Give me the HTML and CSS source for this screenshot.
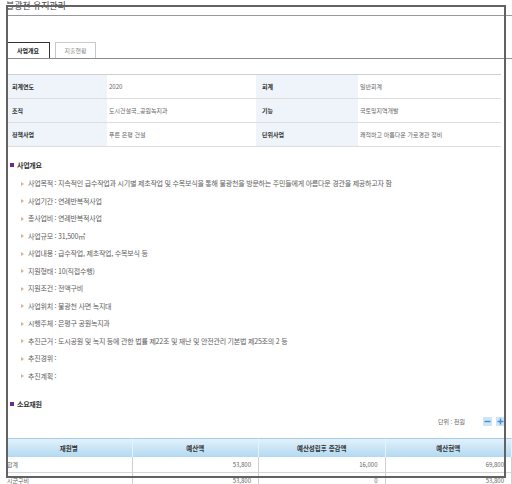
FILE: index.html
```html
<!DOCTYPE html>
<html lang="ko">
<head>
<meta charset="utf-8">
<title>불광천 유지관리</title>
<link rel="stylesheet" href="styles.css">
</head>
<body>
<div class="page">
  <div class="title">불광천 유지관리</div>
  <div class="tabs">
    <div class="tab active">사업개요</div>
    <div class="tab">지출현황</div>
  </div>

  <div class="info">
    <div class="lbl">회계연도</div><div class="val">2020</div>
    <div class="lbl">회계</div><div class="val">일반회계</div>
    <div class="lbl">조직</div><div class="val">도시건설국_공원녹지과</div>
    <div class="lbl">기능</div><div class="val">국토및지역개발</div>
    <div class="lbl">정책사업</div><div class="val">푸른 은평 건설</div>
    <div class="lbl">단위사업</div><div class="val">쾌적하고 아름다운 가로경관 정비</div>
  </div>

  <div class="sec first"><span class="sq"></span>사업개요</div>
  <ul class="items">
    <li><span class="arr"></span>사업목적 : 지속적인 급수작업과 시기별 제초작업 및 수목보식을 통해 불광천을 방문하는 주민들에게 아름다운 경관을 제공하고자 함</li>
    <li><span class="arr"></span>사업기간 : 연례반복적사업</li>
    <li><span class="arr"></span>총사업비 : 연례반복적사업</li>
    <li><span class="arr"></span>사업규모 : 31,500㎡</li>
    <li><span class="arr"></span>사업내용 : 급수작업, 제초작업, 수목보식 등</li>
    <li><span class="arr"></span>지원형태 : 10(직접수행)</li>
    <li><span class="arr"></span>지원조건 : 전액구비</li>
    <li><span class="arr"></span>사업위치 : 불광천 사면 녹지대</li>
    <li><span class="arr"></span>시행주체 : 은평구 공원녹지과</li>
    <li><span class="arr"></span>추진근거 : 도시공원 및 녹지 등에 관한 법률 제22조 및 재난 및 안전관리 기본법 제25조의 2 등</li>
    <li><span class="arr"></span>추진경위 :</li>
    <li><span class="arr"></span>추진계획 :</li>
  </ul>

  <div class="sec second"><span class="sq"></span>소요재원</div>
  <div class="unit">
    <span class="unit-text">단위 : 천원</span>
    <span class="btn"><svg viewBox="0 0 9 9" width="9" height="9"><rect x="1.5" y="3.8" width="6" height="1.4" fill="#3f8fd4"/></svg></span>
    <span class="btn"><svg viewBox="0 0 9 9" width="9" height="9"><rect x="1.5" y="3.8" width="6" height="1.4" fill="#3f8fd4"/><rect x="3.8" y="1.5" width="1.4" height="6" fill="#3f8fd4"/></svg></span>
  </div>

  <div class="budget">
    <div class="bh">재원별</div>
    <div class="bh">예산액</div>
    <div class="bh">예산성립후 증감액</div>
    <div class="bh">예산현액</div>
    <div class="bd name">합계</div>
    <div class="bd num">53,800</div>
    <div class="bd num">16,000</div>
    <div class="bd num">69,800</div>
    <div class="bd name">시군구비</div>
    <div class="bd num">53,800</div>
    <div class="bd num">0</div>
    <div class="bd num">53,800</div>
  </div>
</div>
<div class="frame"></div>
</body>
</html>
```
FILE: styles.css
```css
* { box-sizing: border-box; }
html, body { margin: 0; padding: 0; }
body {
  font-family: "Noto Sans CJK KR", "Noto Sans", sans-serif;
  color: #555;
  background: #fff;
  width: 512px;
  height: 484px;
  overflow: hidden;
}
.page {
  margin-left: 6px;
  width: 506px;
}
.title {
  height: 16px;
  border-bottom: 1px solid #9a9a9a;
  font-size: 9px;
  line-height: 12px;
  color: #444;
  letter-spacing: -0.1px;
}
.tabs {
  display: flex;
  gap: 5px;
  padding-top: 26px;
  border-bottom: 1px solid #8c8c8c;
}
.tab {
  width: 41px;
  height: 16px;
  border: 1px solid #c8c8c8;
  border-bottom: 0;
  font-size: 6px;
  line-height: 15px;
  text-align: center;
  color: #8a8a8a;
}
.tab.active {
  width: 44px;
  border-color: #333;
  color: #222;
  font-weight: bold;
}
.info {
  margin-top: 15px;
  width: 495px;
  display: grid;
  grid-template-columns: 101px 149px 102px 143px;
  border-top: 1px solid #cfcfcf;
}
.info > div {
  height: 24px;
  border-bottom: 1px solid #dedede;
  font-size: 6px;
  line-height: 23px;
  white-space: nowrap;
}
.lbl {
  background: #eef4fa;
  color: #333;
  font-weight: bold;
  padding-left: 6px;
}
.val {
  color: #666;
  padding-left: 2px;
}
.sec {
  height: 14px;
  display: flex;
  align-items: center;
  padding-left: 4px;
  font-size: 7px;
  font-weight: bold;
  color: #333;
  letter-spacing: -0.3px;
}
.sec.first { margin-top: 11px; }
.sec.second { margin-top: 12px; }
.sq {
  width: 4px;
  height: 4px;
  background: #6b2a8c;
  margin-right: 3px;
}
.items {
  list-style: none;
  margin: 3px 0 0 0;
  padding: 0 0 0 15px;
}
.items li {
  height: 17.5px;
  line-height: 17.5px;
  font-size: 7px;
  letter-spacing: -0.22px;
  color: #5e5e5e;
  white-space: nowrap;
  display: flex;
  align-items: center;
}
.arr {
  width: 0;
  height: 0;
  border-left: 3px solid #dcb088;
  border-top: 2px solid transparent;
  border-bottom: 2px solid transparent;
  margin-right: 4px;
  flex: none;
}
.unit {
  margin-top: 2px;
  height: 17px;
  display: flex;
  justify-content: flex-end;
  align-items: center;
  gap: 4px;
  padding-right: 7px;
}
.unit-text {
  font-size: 6px;
  color: #666;
  margin-right: 14px;
}
.btn {
  width: 9px;
  height: 9px;
  background: #cfe4f5;
  display: block;
}
.btn svg { display: block; }
.budget {
  margin-top: 8px;
  display: grid;
  grid-template-columns: repeat(4, 1fr);
}
.bh {
  height: 19px;
  line-height: 18px;
  background: linear-gradient(#e3f1fb, #b2d9f1);
  border-top: 1px solid #a3cdea;
  border-right: 1px solid #e6f2fb;
  text-align: center;
  font-size: 6.5px;
  font-weight: bold;
  color: #333;
}
.bd {
  height: 16px;
  line-height: 15px;
  border-bottom: 1px solid #d6d6d6;
  border-right: 1px solid #d0d0d0;
  font-size: 6px;
  color: #666;
}
.bd.name { padding-left: 1px; }
.bd.num { text-align: right; padding-right: 7px; }
.frame {
  position: fixed;
  left: 6px;
  top: 5px;
  width: 500px;
  height: 473px;
  border: 2px solid #626262;
  pointer-events: none;
}
```
